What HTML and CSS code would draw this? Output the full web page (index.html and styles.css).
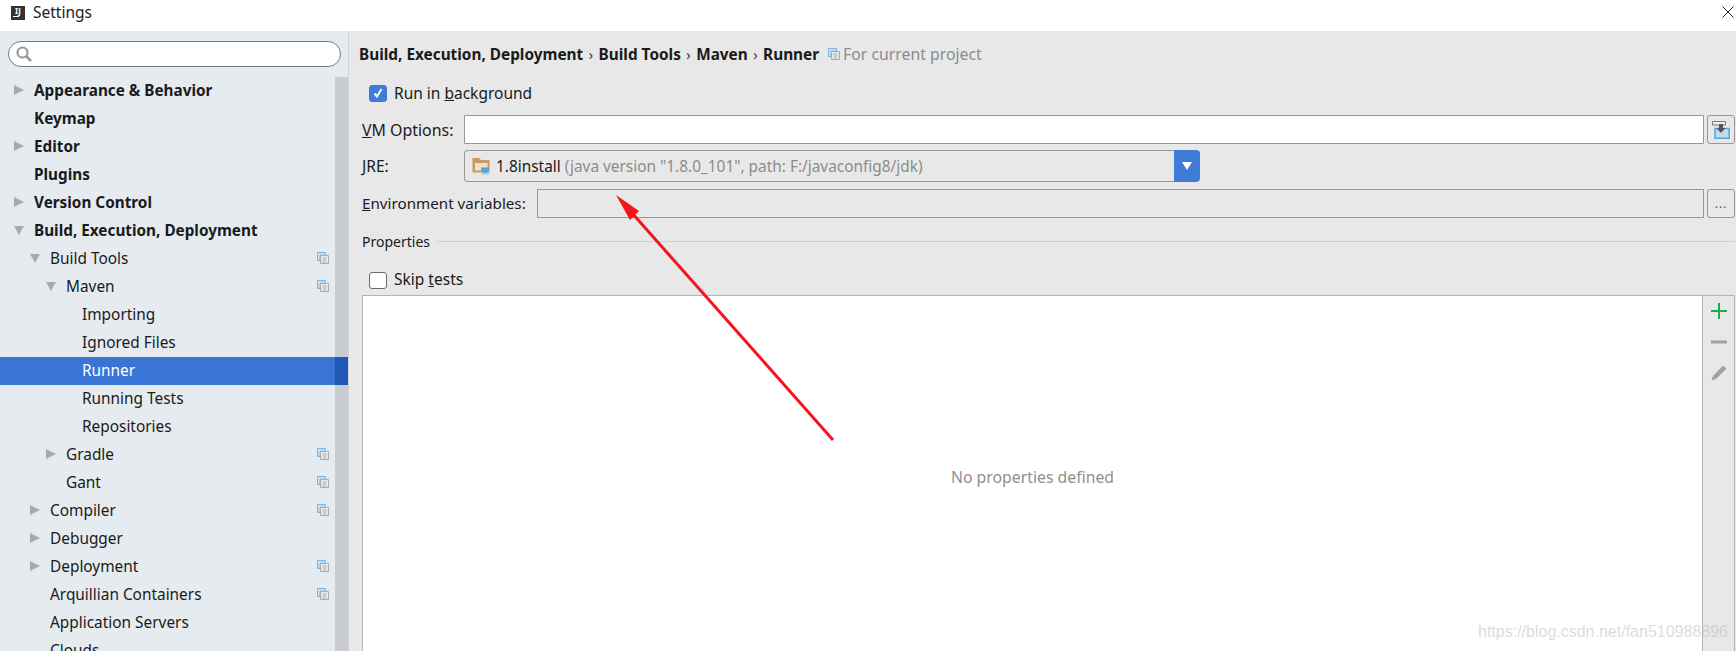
FILE: index.html
```html
<!DOCTYPE html>
<html lang="en">
<head>
<meta charset="utf-8">
<title>Settings</title>
<link rel="stylesheet" href="styles.css">
</head>
<body>
<svg width="0" height="0" class="defs">
  <defs>
    <symbol id="right" viewBox="0 0 10 10"><path d="M0 0L10 5L0 10Z" fill="#a8aaac"/></symbol>
    <symbol id="down" viewBox="0 0 10 10"><path d="M0 1H10L5 10Z" fill="#a8aaac"/></symbol>
    <symbol id="copy" viewBox="0 0 12 12">
      <path d="M0.5 0.5H8.5V3H3V8.5H0.5Z" fill="#d3e3f0" stroke="#7fb2d8"/>
      <path d="M3.5 3.5H11.5V11.5H3.5Z" fill="#e6e9ec" stroke="#a9adb0"/>
      <path d="M5.5 6H9.5M5.5 8H9.5M5.5 10H9.5" stroke="#a9adb0" stroke-width="0.9"/>
    </symbol>
  </defs>
</svg>
<div class="window">
  <header class="titlebar">
    <span class="logo"><span class="logo-text">IJ</span><span class="logo-bar"></span></span>
    <span class="title">Settings</span>
    <svg class="close" width="12" height="12" viewBox="0 0 12 12"><path d="M0.5 0.5L11.5 11.5M11.5 0.5L0.5 11.5" stroke="#222" stroke-width="1"/></svg>
  </header>
  <div class="body">
    <aside class="sidebar">
      <div class="search-wrap">
        <div class="search">
          <svg width="18" height="18" viewBox="0 0 18 18"><circle cx="7.5" cy="7.5" r="5" fill="none" stroke="#999" stroke-width="2.2"/><path d="M11 11L16 16" stroke="#999" stroke-width="2.6"/></svg>
        </div>
      </div>
      <div class="tree">
        <div class="rows">
          <div class="row l0 bold"><svg class="tw"><use href="#right"/></svg><span>Appearance &amp; Behavior</span></div>
          <div class="row l0 bold"><i class="tw"></i><span>Keymap</span></div>
          <div class="row l0 bold"><svg class="tw"><use href="#right"/></svg><span>Editor</span></div>
          <div class="row l0 bold"><i class="tw"></i><span>Plugins</span></div>
          <div class="row l0 bold"><svg class="tw"><use href="#right"/></svg><span>Version Control</span></div>
          <div class="row l0 bold"><svg class="tw"><use href="#down"/></svg><span>Build, Execution, Deployment</span></div>
          <div class="row l1"><svg class="tw"><use href="#down"/></svg><span>Build Tools</span><svg class="cp"><use href="#copy"/></svg></div>
          <div class="row l2"><svg class="tw"><use href="#down"/></svg><span>Maven</span><svg class="cp"><use href="#copy"/></svg></div>
          <div class="row l3"><i class="tw"></i><span>Importing</span></div>
          <div class="row l3"><i class="tw"></i><span>Ignored Files</span></div>
          <div class="row l3 selected"><i class="tw"></i><span>Runner</span></div>
          <div class="row l3"><i class="tw"></i><span>Running Tests</span></div>
          <div class="row l3"><i class="tw"></i><span>Repositories</span></div>
          <div class="row l2"><svg class="tw"><use href="#right"/></svg><span>Gradle</span><svg class="cp"><use href="#copy"/></svg></div>
          <div class="row l2"><i class="tw"></i><span>Gant</span><svg class="cp"><use href="#copy"/></svg></div>
          <div class="row l1"><svg class="tw"><use href="#right"/></svg><span>Compiler</span><svg class="cp"><use href="#copy"/></svg></div>
          <div class="row l1"><svg class="tw"><use href="#right"/></svg><span>Debugger</span></div>
          <div class="row l1"><svg class="tw"><use href="#right"/></svg><span>Deployment</span><svg class="cp"><use href="#copy"/></svg></div>
          <div class="row l1"><i class="tw"></i><span>Arquillian Containers</span><svg class="cp"><use href="#copy"/></svg></div>
          <div class="row l1"><i class="tw"></i><span>Application Servers</span></div>
          <div class="row l1"><i class="tw"></i><span>Clouds</span></div>
        </div>
        <div class="scrollbar"></div>
      </div>
    </aside>
    <main class="content">
      <div class="crumbs">
        <b>Build, Execution, Deployment</b><span class="sep">›</span><b>Build Tools</b><span class="sep">›</span><b>Maven</b><span class="sep">›</span><b>Runner</b>
        <svg class="cp crumb-cp"><use href="#copy"/></svg><span class="scope">For current project</span>
      </div>
      <label class="check-row run-row">
        <span class="check on"><svg width="12" height="12" viewBox="0 0 12 12"><path d="M2.5 6.5L5 9.5L9.5 2" fill="none" stroke="#fff" stroke-width="2"/></svg></span>
        <span>Run in <u>b</u>ackground</span>
      </label>
      <div class="field vm-row">
        <span class="lab vm-lab vm-text"><u>V</u>M Options:</span>
        <div class="input white"></div>
        <div class="side-btn">
          <svg width="18" height="18" viewBox="0 0 18 18">
            <path d="M3 7.5H17.2V17.2H3Z" fill="#bcdcf0" stroke="#5aa5d6" stroke-width="1.5"/>
            <path d="M0.5 0.5H13.5V4H0.5Z" fill="#eeeeee" stroke="#777" stroke-width="1"/>
            <path d="M7 3H11V7H13.5L9 12L4.5 7H7Z" fill="#555"/>
          </svg>
        </div>
      </div>
      <div class="jre-row">
        <span class="lab vm-lab"><u>J</u>RE:</span>
        <div class="combo">
          <div class="combo-main">
            <svg class="folder" width="19" height="18" viewBox="0 0 19 18">
              <path d="M0.5 1H7L9 3H17.5V15.5H0.5Z" fill="#c79b62"/>
              <path d="M3 6H15.5V13.5H3Z" fill="#efe0c6"/>
              <path d="M9 10.5H17V12C17 15 15.5 16 13 16C10.5 16 9 15 9 12Z" fill="#4fa8dc"/>
              <path d="M9 16.3H17.5V17.5H9Z" fill="#8cc6e8"/>
            </svg>
            <span class="jre-name">1.8install</span>
            <span class="jre-info">(java version "1.8.0_101", path: F:/javaconfig8/jdk)</span>
          </div>
          <div class="combo-btn"><svg width="10" height="8" viewBox="0 0 10 8"><path d="M0 0H10L5 8Z" fill="#fff"/></svg></div>
        </div>
      </div>
      <div class="field env-row">
        <span class="lab env-lab"><u>E</u>nvironment variables:</span>
        <div class="input"></div>
        <div class="side-btn dots">...</div>
      </div>
      <div class="props-head">
        <span class="props-title">Properties</span>
        <div class="rule"></div>
      </div>
      <label class="check-row skip-row">
        <span class="check"></span>
        <span class="skip-label">Skip <u>t</u>ests</span>
      </label>
      <div class="table">
        <div class="table-main">No properties defined</div>
        <div class="toolbar">
          <svg width="16" height="16" viewBox="0 0 16 16"><path d="M8 0V16M0 8H16" stroke="#1faa48" stroke-width="2"/></svg>
          <svg width="16" height="16" viewBox="0 0 16 16"><path d="M0 8H16" stroke="#a2a2a2" stroke-width="3"/></svg>
          <svg width="16" height="16" viewBox="0 0 16 16"><path d="M12 0.5L15.5 3.5L5 14L0.5 15.5L2 11Z" fill="#a0a0a0"/></svg>
        </div>
      </div>
    </main>
  </div>
  <svg class="arrow" width="260" height="260" viewBox="0 0 260 260">
    <path d="M221 245L20 18" stroke="#f5141c" stroke-width="3" fill="none"/>
    <path d="M4 0L27 16L18 25Z" fill="#f5141c"/>
  </svg>
  <div class="watermark">https://blog.csdn.net/fan510988896</div>
</div>
</body>
</html>
```
FILE: styles.css
```css
* { box-sizing: border-box; }
html, body { margin: 0; padding: 0; height: 651px; overflow: hidden; background: #fff; }
body { font-family: "Noto Sans", "Open Sans", "Liberation Sans", sans-serif; font-size: 15.5px; color: #1a1a1a; }
.defs { position: absolute; }
.window { position: relative; height: 651px; overflow: hidden; display: flex; flex-direction: column; }

.titlebar { height: 31px; flex: none; display: flex; align-items: center; padding: 0 2px 7px 11px; background: #fff; }
.logo { width: 14px; height: 14px; background: #333; display: flex; flex-direction: column; align-items: center; color: #fff; overflow: hidden; margin-top: 1px; }
.logo-text { font-size: 8px; font-weight: 700; line-height: 9px; }
.logo-bar { width: 6px; height: 1px; background: #fff; margin-top: 1px; align-self: flex-start; margin-left: 2px; }
.title { margin-left: 8px; color: #222; }
.close { margin-left: auto; }

.body { flex: 1; display: flex; min-height: 0; }
.sidebar { width: 349px; flex: none; background: #e6ebf0; border-right: 1px solid #d2d4d6; display: flex; flex-direction: column; }
.search-wrap { height: 46px; flex: none; padding: 10px 7px 0 8px; }
.search { height: 26px; border: 1px solid #77797b; border-radius: 13px; background: #fff; display: flex; align-items: center; padding-left: 6px; }
.tree { flex: 1; display: flex; min-height: 0; }
.rows { width: 335px; flex: none; font-size: 15.4px; }
.scrollbar { width: 13px; flex: none; background: #c9cdd1; }

.row { height: 28px; display: flex; align-items: center; position: relative; white-space: nowrap; padding: 0 6px 2px 0; }
.row.bold { font-weight: 700; font-size: 15.3px; }
.l0 { padding-left: 14px; }
.l1 { padding-left: 30px; }
.l2 { padding-left: 46px; }
.l3 { padding-left: 62px; }
.tw { width: 10px; height: 10px; margin-right: 10px; flex: none; display: block; }
.cp { width: 12px; height: 12px; margin-left: auto; flex: none; }
.selected { background: #3875d7; color: #fff; }
.selected::after { content: ""; position: absolute; top: 0; bottom: 0; left: 100%; width: 13px; background: #2058b8; }

.content { flex: 1; min-width: 0; background: #e8e8e8; display: flex; flex-direction: column; padding-left: 13px; }
.crumbs { height: 46px; flex: none; display: flex; align-items: center; white-space: nowrap; margin-left: -3px; font-size: 15.35px; }
.sep { margin: 0 5.5px; color: #333; font-size: 14px; }
.crumb-cp { margin-left: 9px; margin-right: 3px; }
.scope { color: #8c8c8c; font-size: 15.8px; }

.check-row { display: flex; align-items: center; gap: 7px; padding-left: 7px; }
.run-row { height: 16px; margin-top: 8px; }
.skip-row { height: 16px; margin-top: 23px; }
.skip-label { padding-bottom: 2px; }
.check { width: 18px; height: 17px; flex: none; border: 1px solid #6d6d6d; border-radius: 3px; background: #fff; display: flex; align-items: center; justify-content: center; }
.check.on { background: #3f7bd8; border-color: #3f7bd8; }

.field { display: flex; align-items: stretch; }
.lab { display: flex; align-items: center; white-space: pre; }
.vm-lab { width: 102px; flex: none; }
.vm-text { font-size: 15.9px; }
.env-lab { width: 175px; flex: none; padding-bottom: 2px; font-size: 15.2px; }
.vm-row { height: 29px; margin-top: 14px; }
.env-row { height: 29px; margin-top: 7px; }
.input { flex: 1; border: 1px solid #979797; background: #e8e8e8; margin-right: 3px; }
.input.white { background: #fff; border-radius: 1px; }
.side-btn { width: 28px; flex: none; margin-right: 1px; border: 1px solid #979797; border-radius: 3px; display: flex; align-items: center; justify-content: center; }
.dots { font-size: 12px; line-height: 14px; color: #555; letter-spacing: 1px; }

.jre-row { display: flex; height: 32px; margin-top: 6px; }
.combo { width: 736px; flex: none; display: flex; border-radius: 4px; font-size: 15.4px; }
.combo-main { flex: 1; display: flex; align-items: center; border: 1px solid #979797; border-right: none; border-radius: 4px 0 0 4px; padding-left: 7px; white-space: nowrap; }
.folder { margin-right: 5px; flex: none; }
.jre-name { color: #1a1a1a; }
.jre-info { color: #8c8c8c; margin-left: 4px; }
.combo-btn { width: 26px; flex: none; background: #3f7bd8; border-radius: 0 4px 4px 0; display: flex; align-items: center; justify-content: center; }

.props-head { height: 16px; margin-top: 15px; display: flex; align-items: center; gap: 7px; }
.props-title { font-size: 14px; }
.rule { flex: 1; height: 1px; background: #cfcfcf; margin-right: 1px; }

.table { flex: 1; min-height: 0; margin-top: 7px; margin-right: 1px; display: flex; border: 1px solid #b4b4b4; border-bottom: none; }
.table-main { flex: 1; background: #fff; border-right: 1px solid #b4b4b4; display: flex; align-items: center; justify-content: center; color: #8f8f8f; padding-top: 6px; font-size: 15.8px; }
.toolbar { width: 31px; flex: none; display: flex; flex-direction: column; align-items: center; gap: 15px; padding-top: 7px; }

.arrow { position: absolute; left: 612px; top: 195px; }
.watermark { position: absolute; left: 1478px; top: 623px; font-family: "Liberation Sans", sans-serif; font-size: 16px; color: rgba(190,190,190,0.55); white-space: nowrap; }
```
